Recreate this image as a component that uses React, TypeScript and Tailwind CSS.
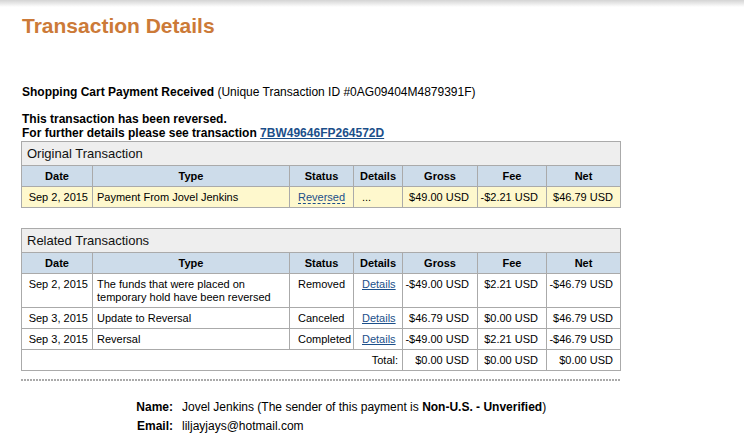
const cols = "grid grid-cols-[70px_197px_64px_49px_75px_69px_74px]";

type Row = {
  date: string;
  type: string;
  status: string;
  gross: string;
  fee: string;
  net: string;
  h?: string;
};

const related: Row[] = [
  {
    date: "Sep 2, 2015",
    type: "The funds that were placed on temporary hold have been reversed",
    status: "Removed",
    gross: "-$49.00 USD",
    fee: "$2.21 USD",
    net: "-$46.79 USD",
    h: "h-[34px]",
  },
  {
    date: "Sep 3, 2015",
    type: "Update to Reversal",
    status: "Canceled",
    gross: "$46.79 USD",
    fee: "$0.00 USD",
    net: "$46.79 USD",
  },
  {
    date: "Sep 3, 2015",
    type: "Reversal",
    status: "Completed",
    gross: "-$49.00 USD",
    fee: "$2.21 USD",
    net: "-$46.79 USD",
  },
];

function HeaderRow() {
  const heads = ["Date", "Type", "Status", "Details", "Gross", "Fee", "Net"];
  return (
    <div className={`${cols} h-[21px] border-t border-[#aaaaaa] bg-[#cddcea] text-[11px] font-bold leading-[20px]`}>
      {heads.map((h, i) => (
        <div key={h} className={`text-center ${i > 0 ? "border-l border-[#aaaaaa]" : ""}`}>
          {h}
        </div>
      ))}
    </div>
  );
}

function Caption({ title }: { title: string }) {
  return (
    <div className="h-[23px] bg-[#eeeeee] pl-[5px] text-[13px] leading-[23px] text-[#111]">
      {title}
    </div>
  );
}

const cell = "border-l border-[#aaaaaa] pt-[4px]";

export default function App() {
  return (
    <div className="w-[744px] h-[433px] overflow-hidden bg-white font-['Liberation_Sans',Arial,sans-serif] text-[12px] text-black">
      <div className="h-[7px] bg-gradient-to-b from-[#d4d4d4] to-white" />

      <h1 className="ml-[22px] mt-[7px] text-[21px] font-bold leading-[24px] text-[#cc7a38]">
        Transaction Details
      </h1>

      <div className="ml-[22px] mt-[47px] leading-[14px]">
        <span className="font-bold">Shopping Cart Payment Received</span>{" "}
        (Unique Transaction ID #0AG09404M4879391F)
      </div>

      <div className="ml-[22px] mt-[13px] font-bold leading-[14px]">
        <div>This transaction has been reversed.</div>
        <div>
          For further details please see transaction{" "}
          <a href="#" className="text-[#1b4f8a] underline">
            7BW49646FP264572D
          </a>
        </div>
      </div>

      {/* Original transaction */}
      <div className="ml-[21px] mt-[1px] w-[600px] border border-[#aaaaaa] text-[11px] leading-[13px]">
        <Caption title="Original Transaction" />
        <HeaderRow />
        <div className={`${cols} h-[21px] border-t border-[#aaaaaa] bg-[#fef8cd]`}>
          <div className="pt-[4px] pr-[4px] text-right">Sep 2, 2015</div>
          <div className={`${cell} pl-[4px]`}>Payment From Jovel Jenkins</div>
          <div className={`${cell} pl-[8px]`}>
            <span className="border-b border-dashed border-[#1b4f8a] text-[#1b4f8a]">Reversed</span>
          </div>
          <div className={`${cell} pl-[8px]`}>...</div>
          <div className={`${cell} pr-[8px] text-right`}>$49.00 USD</div>
          <div className={`${cell} pr-[8px] text-right`}>-$2.21 USD</div>
          <div className={`${cell} pr-[7px] text-right`}>$46.79 USD</div>
        </div>
      </div>

      {/* Related transactions */}
      <div className="ml-[21px] mt-[20px] w-[600px] border border-[#aaaaaa] text-[11px] leading-[13px]">
        <Caption title="Related Transactions" />
        <HeaderRow />
        {related.map((r, i) => (
          <div key={i} className={`${cols} ${r.h ?? "h-[21px]"} border-t border-[#aaaaaa]`}>
            <div className="pt-[4px] pr-[4px] text-right">{r.date}</div>
            <div className={`${cell} pl-[4px] pr-[8px]`}>{r.type}</div>
            <div className={`${cell} pl-[8px]`}>{r.status}</div>
            <div className={`${cell} pl-[8px]`}>
              <a href="#" className="text-[#1b4f8a] underline">
                Details
              </a>
            </div>
            <div className={`${cell} pr-[8px] text-right`}>{r.gross}</div>
            <div className={`${cell} pr-[8px] text-right`}>{r.fee}</div>
            <div className={`${cell} pr-[7px] text-right`}>{r.net}</div>
          </div>
        ))}
        <div className="grid h-[21px] grid-cols-[380px_75px_69px_74px] border-t border-[#aaaaaa]">
          <div className="pt-[4px] pr-[4px] text-right">Total:</div>
          <div className={`${cell} pr-[8px] text-right`}>$0.00 USD</div>
          <div className={`${cell} pr-[8px] text-right`}>$0.00 USD</div>
          <div className={`${cell} pr-[7px] text-right`}>$0.00 USD</div>
        </div>
      </div>

      <div className="ml-[21px] mt-[8px] h-[2px] w-[600px] bg-[repeating-linear-gradient(90deg,#aaaaaa_0_2px,transparent_2px_3px)]" />

      <div className="mt-[17px] grid grid-cols-[173px_1fr] gap-x-[9px] leading-[19px]">
        <div className="text-right font-bold">Name:</div>
        <div>
          Jovel Jenkins (The sender of this payment is{" "}
          <span className="font-bold">Non-U.S. - Unverified</span>)
        </div>
        <div className="text-right font-bold">Email:</div>
        <div>liljayjays@hotmail.com</div>
      </div>
    </div>
  );
}
